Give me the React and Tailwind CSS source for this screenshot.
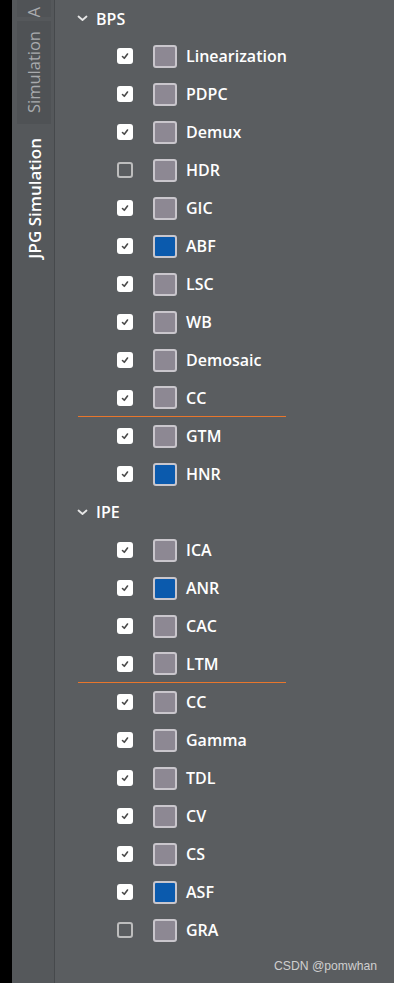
import React from "react";

const bps = [
  ["Linearization", true, false],
  ["PDPC", true, false],
  ["Demux", true, false],
  ["HDR", false, false],
  ["GIC", true, false],
  ["ABF", true, true],
  ["LSC", true, false],
  ["WB", true, false],
  ["Demosaic", true, false],
  ["CC", true, false, true],
  ["GTM", true, false],
  ["HNR", true, true],
];
const ipe = [
  ["ICA", true, false],
  ["ANR", true, true],
  ["CAC", true, false],
  ["LTM", true, false, true],
  ["CC", true, false],
  ["Gamma", true, false],
  ["TDL", true, false],
  ["CV", true, false],
  ["CS", true, false],
  ["ASF", true, true],
  ["GRA", false, false],
];

function Check({ on }) {
  if (!on)
    return <div className="w-[16px] h-[16px] rounded-[3px] border-2 border-[#bdbdbd] box-border" />;
  return (
    <div className="w-[16px] h-[16px] rounded-[3px] bg-white flex items-center justify-center">
      <svg width="10" height="10" viewBox="0 0 10 10">
        <path d="M2.5 5.5 L4.3 7.3 L7.5 3" fill="none" stroke="#4a4a4a" strokeWidth="1.6" strokeLinecap="round" strokeLinejoin="round" />
      </svg>
    </div>
  );
}

function Row({ name, on, blue, line }) {
  return (
    <div className="flex flex-col">
      <div className={`flex items-center ${line ? "h-[37px]" : "h-[38px]"}`}>
        <div className="w-[62px]" />
        <Check on={on} />
        <div className="w-[20px]" />
        <div
          className={`w-[24px] h-[23px] rounded-[3px] border-2 border-[#c9c6cc] ${blue ? "bg-[#0b5aad]" : "bg-[#8d8893]"}`}
        />
        <div className="w-[9px]" />
        <span className="text-white text-[16px] font-semibold leading-none">{name}</span>
      </div>
      {line && <div className="ml-[23px] w-[208px] h-[1px] bg-[#e8762c]" />}
    </div>
  );
}

function Header({ name, h }) {
  return (
    <div className={`flex items-center ${h}`}>
      <div className="w-[22px]" />
      <svg width="11" height="7" viewBox="0 0 11 7">
        <path d="M1.5 1.5 L5.5 5 L9.5 1.5" fill="none" stroke="#e6e6e6" strokeWidth="1.8" strokeLinecap="round" strokeLinejoin="round" />
      </svg>
      <div className="w-[8px]" />
      <span className="text-white text-[16px] font-semibold leading-none">{name}</span>
    </div>
  );
}

export default function App() {
  return (
    <div
      className="flex w-[394px] h-[983px] overflow-hidden"
      style={{ fontFamily: '"Open Sans", "Noto Sans", sans-serif' }}
    >
      <div className="w-[12px] bg-black" />
      <div className="w-[43px] bg-[#55585b] border-r border-[#46494c] flex flex-col items-start pl-[5px]">
        <div className="w-[34px] h-[17px] bg-[#505356] flex items-end justify-center overflow-hidden">
          <span className="[writing-mode:vertical-rl] rotate-180 text-[#a8aaad] text-[16.5px] font-medium leading-none">A</span>
        </div>
        <div className="mt-[4px] w-[34px] h-[103px] bg-[#4f5255] flex items-center justify-center">
          <span className="[writing-mode:vertical-rl] rotate-180 text-[#a8aaad] text-[16.5px] font-medium leading-none">Simulation</span>
        </div>
        <div className="mt-[3px] w-[34px] h-[143px] flex items-center justify-center">
          <span className="[writing-mode:vertical-rl] rotate-180 text-white text-[17px] font-semibold leading-none">JPG Simulation</span>
        </div>
      </div>
      <div className="flex-1 bg-[#5a5d60] relative flex flex-col">
        <Header name="BPS" h="h-[37px]" />
        {bps.map(([n, on, blue, line], i) => (
          <Row key={"b" + i} name={n} on={on} blue={blue} line={line} />
        ))}
        <Header name="IPE" h="h-[38px]" />
        {ipe.map(([n, on, blue, line], i) => (
          <Row key={"i" + i} name={n} on={on} blue={blue} line={line} />
        ))}
        <span
          className="absolute left-[219px] top-[957px] text-[12.2px] text-[#cfcfcf]"
          style={{ fontFamily: '"Liberation Sans", Arial, sans-serif' }}
        >
          CSDN @pomwhan
        </span>
      </div>
    </div>
  );
}
